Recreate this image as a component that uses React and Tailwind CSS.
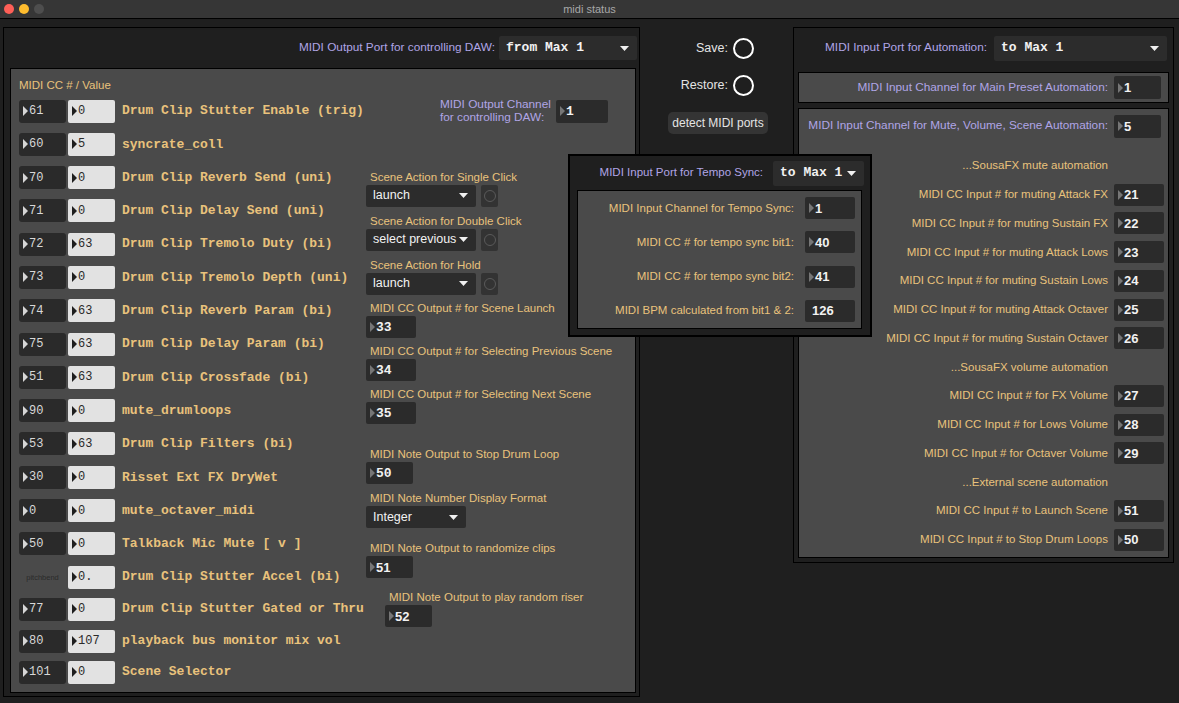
import React from 'react';

const ccRows = [
  ['61', '0', 'Drum Clip Stutter Enable (trig)'],
  ['60', '5', 'syncrate_coll'],
  ['70', '0', 'Drum Clip Reverb Send (uni)'],
  ['71', '0', 'Drum Clip Delay Send (uni)'],
  ['72', '63', 'Drum Clip Tremolo Duty (bi)'],
  ['73', '0', 'Drum Clip Tremolo Depth (uni)'],
  ['74', '63', 'Drum Clip Reverb Param (bi)'],
  ['75', '63', 'Drum Clip Delay Param (bi)'],
  ['51', '63', 'Drum Clip Crossfade (bi)'],
  ['90', '0', 'mute_drumloops'],
  ['53', '63', 'Drum Clip Filters (bi)'],
  ['30', '0', 'Risset Ext FX DryWet'],
  ['0', '0', 'mute_octaver_midi'],
  ['50', '0', 'Talkback Mic Mute [ v ]'],
  [null, '0.', 'Drum Clip Stutter Accel (bi)'],
  ['77', '0', 'Drum Clip Stutter Gated or Thru'],
  ['80', '107', 'playback bus monitor mix vol'],
  ['101', '0', 'Scene Selector'],
];

const autoRows = [
  [null, '...SousaFX mute automation'],
  ['21', 'MIDI CC Input # for muting Attack FX'],
  ['22', 'MIDI CC Input # for muting Sustain FX'],
  ['23', 'MIDI CC Input # for muting Attack Lows'],
  ['24', 'MIDI CC Input # for muting Sustain Lows'],
  ['25', 'MIDI CC Input # for muting Attack Octaver'],
  ['26', 'MIDI CC Input # for muting Sustain Octaver'],
  [null, '...SousaFX volume automation'],
  ['27', 'MIDI CC Input # for FX Volume'],
  ['28', 'MIDI CC Input # for Lows Volume'],
  ['29', 'MIDI CC Input # for Octaver Volume'],
  [null, '...External scene automation'],
  ['51', 'MIDI CC Input # to Launch Scene'],
  ['50', 'MIDI CC Input # to Stop Drum Loops'],
];

const tempoRows = [
  ['MIDI Input Channel for Tempo Sync:', '1'],
  ['MIDI CC # for tempo sync bit1:', '40'],
  ['MIDI CC # for tempo sync bit2:', '41'],
  ['MIDI BPM calculated from bit1 & 2:', '126'],
];

function Tri({ color = '#7a7a7a' }) {
  return (
    <svg width="5" height="10" viewBox="0 0 5 10" className="shrink-0">
      <path d="M0 0L5 5L0 10Z" fill={color} />
    </svg>
  );
}

function Arrow() {
  return (
    <svg width="9" height="5" viewBox="0 0 9 5" className="shrink-0">
      <path d="M0 0H9L4.5 5Z" fill="#f0f0f0" />
    </svg>
  );
}

// dark number box
function NumBox({ value, className = 'w-[50px] h-[22px]', noTri = false, mono = false }) {
  return (
    <div className={`${className} bg-[#2b2b2b] rounded-[2px] flex items-center pl-[4px] gap-[1px] shrink-0`}>
      {!noTri && <Tri color="#767676" />}
      <span
        className={`${noTri ? 'pl-[3px]' : ''} ${
          mono ? "font-['Liberation_Mono',monospace] text-[13px]" : 'text-[13px]'
        } font-bold text-[#f2f2f2] leading-none`}
      >
        {value}
      </span>
    </div>
  );
}

function Dropdown({ text, className, mono = false }) {
  return (
    <div className={`${className} bg-[#2c2c2c] rounded-[2px] flex items-center justify-between pl-[7px] pr-[8px] shrink-0`}>
      <span
        className={
          mono
            ? "font-['Liberation_Mono',monospace] font-bold text-[13px] text-[#f2f2f2]"
            : 'text-[12.5px] text-[#f2f2f2]'
        }
      >
        {text}
      </span>
      <Arrow />
    </div>
  );
}

function Toggle() {
  return (
    <div className="w-[17px] h-[22px] bg-[#333] rounded-[2px] flex items-center justify-center">
      <div className="w-[12px] h-[12px] rounded-full border border-[#5a5a5a]" />
    </div>
  );
}

function GoldLabel({ children }) {
  return (
    <div className="h-[15px] leading-[15px] pl-[4px] text-[11.5px] text-[#e9c27c] whitespace-nowrap">{children}</div>
  );
}

const rowGaps = [
  'mt-0', 'mt-[10.3px]', 'mt-[10.3px]', 'mt-[10.3px]', 'mt-[10.3px]', 'mt-[10.3px]', 'mt-[10.3px]', 'mt-[10.3px]',
  'mt-[10.3px]', 'mt-[10.3px]', 'mt-[10.3px]', 'mt-[10.3px]', 'mt-[10.3px]', 'mt-[10.3px]', 'mt-[10.3px]',
  'mt-[9px]', 'mt-[9px]', 'mt-[8px]',
];

function CcRow({ cc, val, name, gap }) {
  return (
    <div className={`h-[23px] flex items-center ${gap}`}>
      {cc === null ? (
        <div className="w-[47px] h-[23px] flex items-center justify-center text-[7.5px] text-[#2a2a2a]">pitchbend</div>
      ) : (
        <div className="w-[47px] h-[23px] bg-[#2a2a2a] rounded-[3px] flex items-center pl-[4px] gap-[1px]">
          <Tri color="#d6d6d6" />
          <span className="font-['Liberation_Mono',monospace] text-[12px] text-[#d8d8d8]">{cc}</span>
        </div>
      )}
      <div className="ml-[2px] w-[47px] h-[23px] bg-[#e2e2e2] rounded-[2px] flex items-center pl-[4px] gap-[1px]">
        <Tri color="#1e1e1e" />
        <span className="font-['Liberation_Mono',monospace] text-[12px] text-[#2a2a2a]">{val}</span>
      </div>
      <span className="ml-[7px] font-['Liberation_Mono',monospace] font-bold text-[13px] text-[#e9c27c] whitespace-nowrap">
        {name}
      </span>
    </div>
  );
}

function LeftBox() {
  return (
    <div className="w-[637px] h-[670px] border border-black bg-[#1f1f1f] flex flex-col shrink-0">
      <div className="h-[40px] flex items-center justify-end pr-[2px] gap-[4px]">
        <span className="text-[11.8px] text-[#b0a5e6]">MIDI Output Port for controlling DAW:</span>
        <Dropdown text="from Max 1" mono className="w-[138px] h-[24px]" />
      </div>
      <div className="ml-[6px] w-[626px] h-[625px] border border-black bg-[#4a4a4a] flex">
        <div className="w-[355px] pt-[9px] pl-[8px] flex flex-col">
          <div className="h-[14px] leading-[14px] text-[11.5px] text-[#e9c27c]">MIDI CC # / Value</div>
          <div className="mt-[7.5px] flex flex-col">
            {ccRows.map((r, i) => (
              <CcRow key={i} cc={r[0]} val={r[1]} name={r[2]} gap={rowGaps[i]} />
            ))}
          </div>
        </div>
        <div className="flex flex-col">
          <div className="mt-[28.5px] ml-[74px] h-[27px] flex items-center">
            <div className="w-[116px] text-[11.8px] leading-[13.5px] text-[#b0a5e6] whitespace-nowrap">
              MIDI Output Channel
              <br />
              for controlling DAW:
            </div>
            <NumBox value="1" mono className="w-[52px] h-[23px]" />
          </div>

          <div className="mt-[45px]">
            <GoldLabel>Scene Action for Single Click</GoldLabel>
            <div className="flex gap-[5px]">
              <Dropdown text="launch" className="w-[110px] h-[22px]" />
              <Toggle />
            </div>
          </div>
          <div className="mt-[7px]">
            <GoldLabel>Scene Action for Double Click</GoldLabel>
            <div className="flex gap-[5px]">
              <Dropdown text="select previous" className="w-[110px] h-[22px]" />
              <Toggle />
            </div>
          </div>
          <div className="mt-[7px]">
            <GoldLabel>Scene Action for Hold</GoldLabel>
            <div className="flex gap-[5px]">
              <Dropdown text="launch" className="w-[110px] h-[22px]" />
              <Toggle />
            </div>
          </div>

          <div className="mt-[6.7px]">
            <GoldLabel>MIDI CC Output # for Scene Launch</GoldLabel>
            <NumBox value="33" mono className="w-[50px] h-[22px]" />
          </div>
          <div className="mt-[6.3px]">
            <GoldLabel>MIDI CC Output # for Selecting Previous Scene</GoldLabel>
            <NumBox value="34" mono className="w-[50px] h-[22px]" />
          </div>
          <div className="mt-[6px]">
            <GoldLabel>MIDI CC Output # for Selecting Next Scene</GoldLabel>
            <NumBox value="35" mono className="w-[50px] h-[22px]" />
          </div>

          <div className="mt-[23px]">
            <GoldLabel>MIDI Note Output to Stop Drum Loop</GoldLabel>
            <NumBox value="50" mono className="w-[47px] h-[22px]" />
          </div>
          <div className="mt-[6.7px]">
            <GoldLabel>MIDI Note Number Display Format</GoldLabel>
            <Dropdown text="Integer" className="w-[100px] h-[22px]" />
          </div>
          <div className="mt-[13px]">
            <GoldLabel>MIDI Note Output to randomize clips</GoldLabel>
            <NumBox value="51" className="w-[47px] h-[22px]" />
          </div>
          <div className="mt-[12px] ml-[19px]">
            <GoldLabel>MIDI Note Output to play random riser</GoldLabel>
            <NumBox value="52" className="w-[47px] h-[22px]" />
          </div>
        </div>
      </div>
    </div>
  );
}

function Middle() {
  return (
    <div className="w-[153px] shrink-0 flex flex-col">
      <div className="mt-[10px] h-[22px] flex items-center justify-end pr-[39px] gap-[5px]">
        <span className="text-[12.5px] text-[#e4e4e4]">Save:</span>
        <div className="w-[21px] h-[21px] rounded-full border-2 border-white" />
      </div>
      <div className="mt-[15px] h-[22px] flex items-center justify-end pr-[39px] gap-[5px]">
        <span className="text-[12.5px] text-[#e4e4e4]">Restore:</span>
        <div className="w-[21px] h-[21px] rounded-full border-2 border-white" />
      </div>
      <div className="mt-[16px] ml-[28px] w-[100px] h-[22px] rounded-[5px] bg-[#343434] flex items-center justify-center text-[12px] text-[#e4e4e4] whitespace-nowrap">
        detect MIDI ports
      </div>
    </div>
  );
}

function RightBox() {
  return (
    <div className="w-[381px] h-[536px] border border-black bg-[#1f1f1f] flex flex-col shrink-0">
      <div className="h-[40px] flex items-center justify-end pr-[6px] gap-[7px]">
        <span className="text-[11.8px] text-[#b0a5e6]">MIDI Input Port for Automation:</span>
        <Dropdown text="to Max 1" mono className="w-[173px] h-[25px]" />
      </div>
      <div className="ml-[4px] mt-[4px] w-[371px] h-[31px] border border-black bg-[#4a4a4a] flex items-center justify-end pr-[7px] gap-[6px]">
        <span className="text-[11.8px] text-[#b0a5e6]">MIDI Input Channel for Main Preset Automation:</span>
        <NumBox value="1" className="w-[47px] h-[23px]" />
      </div>
      <div className="ml-[4px] mt-[5px] w-[371px] h-[450px] border border-black bg-[#4a4a4a] flex flex-col pt-[5.5px]">
        <div className="h-[23px] flex items-center gap-[6px]">
          <span className="w-[309px] text-right text-[11.8px] text-[#b0a5e6] whitespace-nowrap">
            MIDI Input Channel for Mute, Volume, Scene Automation:
          </span>
          <NumBox value="5" className="w-[47px] h-[23px]" />
        </div>
        <div className="mt-[14px] flex flex-col">
          {autoRows.map(([v, label], i) => (
            <div key={i} className="h-[28.75px] flex items-center gap-[6px]">
              <span className="w-[309px] text-right text-[11.5px] text-[#e9c27c] whitespace-nowrap">{label}</span>
              {v && <NumBox value={v} className="w-[50px] h-[22px]" />}
            </div>
          ))}
        </div>
      </div>
    </div>
  );
}

function TempoPanel() {
  return (
    <div className="absolute left-[568px] top-[135px] w-[304px] h-[183px] border-2 border-black bg-[#1f1f1f] flex flex-col">
      <div className="h-[34px] flex items-center justify-end pr-[6px] gap-[10px]">
        <span className="text-[11.5px] text-[#b0a5e6]">MIDI Input Port for Tempo Sync:</span>
        <div className="w-[91px] h-[25px] bg-[#2c2c2c] rounded-[2px] flex items-center pl-[7px] gap-[5px]">
          <span className="font-['Liberation_Mono',monospace] font-bold text-[13px] text-[#f2f2f2]">to Max 1</span>
          <Arrow />
        </div>
      </div>
      <div className="ml-[7px] w-[285px] h-[139px] border border-black bg-[#4a4a4a] flex flex-col">
        {tempoRows.map(([label, v], i) => (
          <div key={i} className="h-[34.3px] flex items-center justify-end pr-[6px] gap-[11px]">
            <span className="text-[11.5px] text-[#e9c27c]">{label}</span>
            <NumBox value={v} noTri={i === 3} className="w-[50px] h-[22px]" />
          </div>
        ))}
      </div>
    </div>
  );
}

function TitleBar() {
  return (
    <div className="h-[19px] bg-[#363636] border-b border-black grid grid-cols-[1fr_auto_1fr] items-center shrink-0">
      <div className="flex items-center gap-[5px] pl-[4px]">
        <div className="w-[10px] h-[10px] rounded-full bg-[#fe5f57]" />
        <div className="w-[10px] h-[10px] rounded-full bg-[#febc2e]" />
        <div className="w-[10px] h-[10px] rounded-full bg-[#4e4e4e]" />
      </div>
      <div className="text-[11px] text-[#a8a8a8]">midi status</div>
      <div />
    </div>
  );
}

export default function App() {
  return (
    <div className="w-[1179px] h-[703px] bg-[#1f1f1f] flex flex-col overflow-hidden font-['Liberation_Sans',Arial,sans-serif]">
      <TitleBar />
      <div className="relative flex-1 flex items-start pt-[8px] pl-[3px]">
        <LeftBox />
        <Middle />
        <RightBox />
        <TempoPanel />
      </div>
    </div>
  );
}
